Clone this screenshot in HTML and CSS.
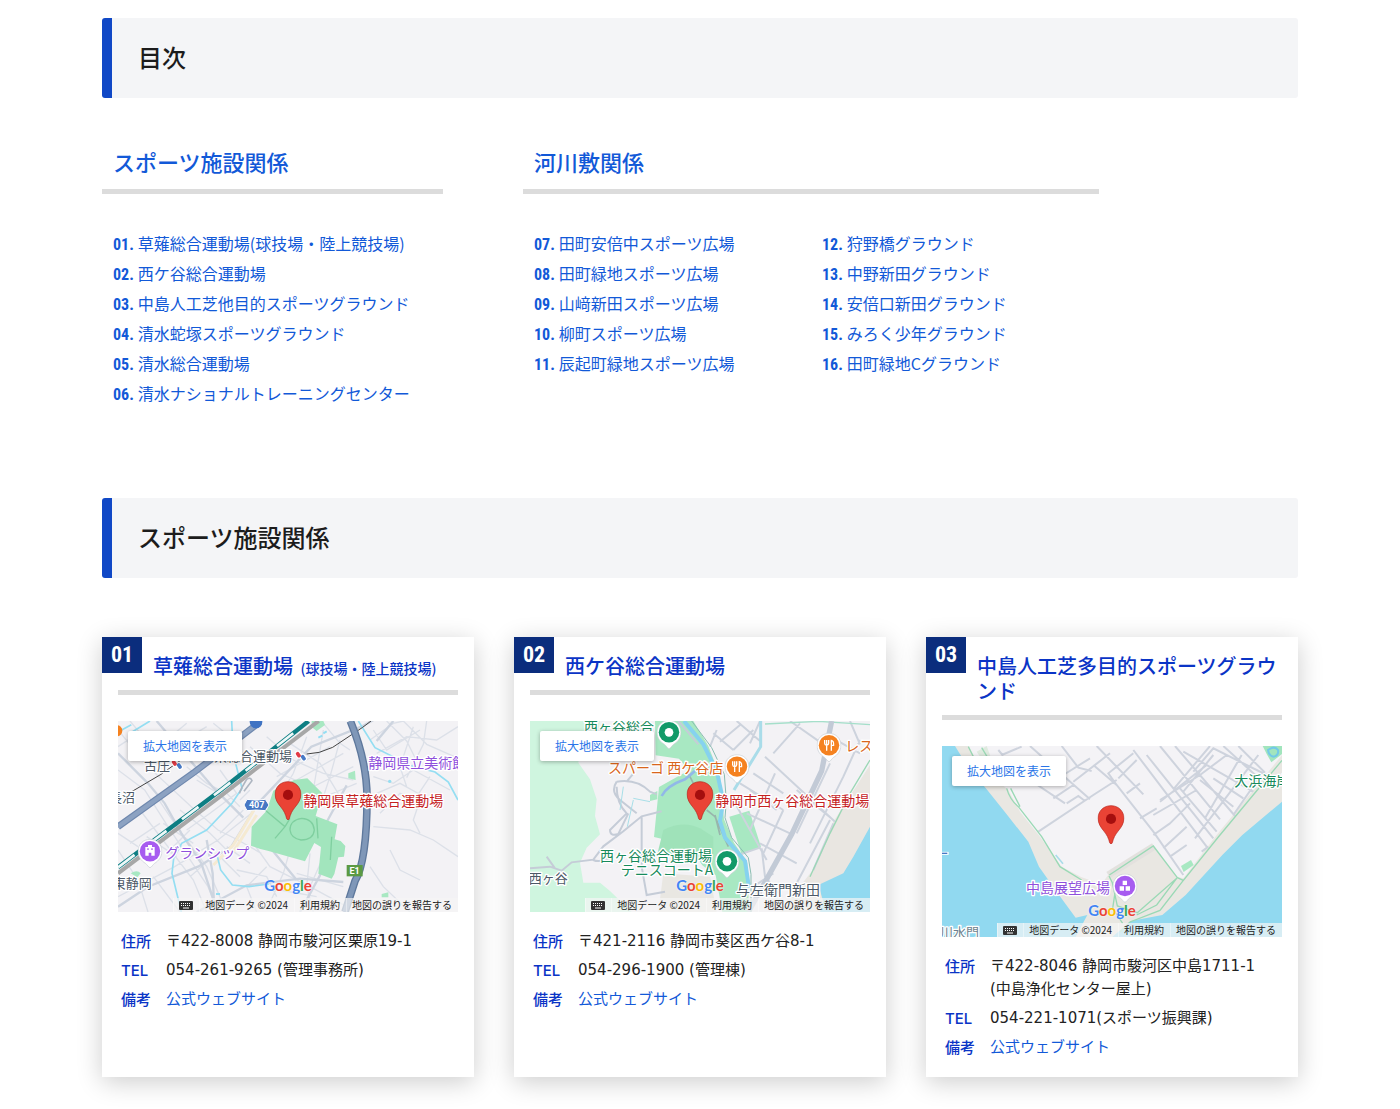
FILE: index.html
```html
<!DOCTYPE html>
<html lang="ja">
<head>
<meta charset="utf-8">
<meta name="viewport" content="width=device-width, initial-scale=1">
<title>スポーツ施設一覧</title>
<link rel="stylesheet" href="styles.css">
</head>
<body>
<svg class="sprite" aria-hidden="true">
  <symbol id="pin" viewBox="0 0 80 116">
    <path d="M40 2C18 2 2 18 2 39c0 15 7 26 17 38 9 11 14 21 17 34 1 4 7 4 8 0 3-13 8-23 17-34 10-12 17-23 17-38C78 18 62 2 40 2z" fill="#ea4335" stroke="#b8251c" stroke-width="2"/>
    <circle cx="40" cy="41" r="15" fill="#a50e0e"/>
  </symbol>
  <symbol id="marker" viewBox="0 0 72 86">
    <path d="M36 1C16 1 1 16 1 36c0 17 10 28 21 35 6 4 10 13 14 13s8-9 14-13c11-7 21-18 21-35C71 16 56 1 36 1z" fill="#fff" stroke="#c9ced4" stroke-width="2"/>
    <circle cx="36" cy="36" r="30" fill="currentColor"/>
  </symbol>
  <symbol id="fork" viewBox="0 0 34 36">
    <path d="M4 2v10q0 5 6 6v16M16 2v10q0 5-6 6M10 2v16M24 34V3q8 2 7 15h-7" fill="none" stroke="#fff" stroke-width="4"/>
  </symbol>
  <symbol id="keyboard" viewBox="0 0 14 9">
    <rect width="14" height="9" rx="1" fill="#333"/>
    <path d="M2 2.500h10M2 4.500h10" stroke="#fff" stroke-dasharray="1 1"/>
    <path d="M4 7h6" stroke="#fff"/>
  </symbol>
</svg>

<main class="page">
  <h2 class="banner">目次</h2>

  <nav class="toc" aria-label="目次">
    <section class="toc-group toc-sports">
      <h3 class="toc-title"><a href="#sports">スポーツ施設関係</a></h3>
      <ul class="toc-list">
        <li><a href="#f01"><b>01.</b>草薙総合運動場(球技場・陸上競技場)</a></li>
        <li><a href="#f02"><b>02.</b>西ケ谷総合運動場</a></li>
        <li><a href="#f03"><b>03.</b>中島人工芝他目的スポーツグラウンド</a></li>
        <li><a href="#f04"><b>04.</b>清水蛇塚スポーツグラウンド</a></li>
        <li><a href="#f05"><b>05.</b>清水総合運動場</a></li>
        <li><a href="#f06"><b>06.</b>清水ナショナルトレーニングセンター</a></li>
      </ul>
    </section>
    <section class="toc-group toc-river">
      <h3 class="toc-title"><a href="#river">河川敷関係</a></h3>
      <div class="toc-columns">
        <ul class="toc-list">
          <li><a href="#f07"><b>07.</b>田町安倍中スポーツ広場</a></li>
          <li><a href="#f08"><b>08.</b>田町緑地スポーツ広場</a></li>
          <li><a href="#f09"><b>09.</b>山﨑新田スポーツ広場</a></li>
          <li><a href="#f10"><b>10.</b>柳町スポーツ広場</a></li>
          <li><a href="#f11"><b>11.</b>辰起町緑地スポーツ広場</a></li>
        </ul>
        <ul class="toc-list">
          <li><a href="#f12"><b>12.</b>狩野橋グラウンド</a></li>
          <li><a href="#f13"><b>13.</b>中野新田グラウンド</a></li>
          <li><a href="#f14"><b>14.</b>安倍口新田グラウンド</a></li>
          <li><a href="#f15"><b>15.</b>みろく少年グラウンド</a></li>
          <li><a href="#f16"><b>16.</b>田町緑地Cグラウンド</a></li>
        </ul>
      </div>
    </section>
  </nav>

  <h2 class="banner" id="sports">スポーツ施設関係</h2>

  <div class="cards">
    <article class="card" id="f01">
      <span class="badge">01</span>
      <h3 class="card-title">草薙総合運動場 <small>(球技場・陸上競技場)</small></h3>
      <div class="map">
        <svg class="map-art" viewBox="24 33 1020 573" role="img" aria-label="草薙総合運動場の地図">
          <rect x="24" y="33" width="1020" height="573" fill="#f3f2f5"/>
          <path d="M24 180l80 60 70 110 60 90 60 90 30 76M24 60l90 110 130 120 80 70 60 30 70 40M60 400l90-60M24 420l60 90 30 96M90 300l160 210 40 96M140 260l60 90 90 120 60 136M24 560l170-90 130-80 100-80M230 170l60 50 60 30 40 40M190 110l100-60M260 210l80 50M330 180l50 70-80 60-70 50M110 380l90 60M160 340l90 60M210 300l90 70 50 50M180 420l60-60M240 500l90-80M130 500l80 106M420 110l90 80 90 40M470 80l80 70 90 40 90 20M540 100l90 60 60 100M590 80l-40 110-30 50M640 60l-20 120-10 60M690 90l-30 110-20 60M500 200l160-90M560 210l140-80M590 240l140-70M620 270l120-50M640 40l50 60 30 20M790 60l40 60 100-60M780 90l70-50 30-7M830 33l60 60 30 60M880 33l70 70 90 40M800 130l90-50 90 10 64-40M910 50l-40 120 20 60M950 33l-10 70-50 100M790 200l60 20 60-40 110 60M800 250l70-30 90 50M810 310l60-60 60 20-20 60 20 40M790 350l110 10 70 30 74 50M960 200l-40 60M430 400l50 70 120 60 110 60M470 470l-60 60 30 76M540 420l-20 70-50 110M600 430l-10 100 20 76M640 440l-40 90M560 490l140 40M510 540l110 20M380 480l90 20 30 60M350 410l70 50M330 440l60 60M24 370l60 40M780 470l40 60 80 76M840 420l30 60 60 30M170 90l60-50M24 110l60-40M60 33l50 60M310 40l50 40M400 300l-70 70M420 240l-30 30" fill="none" stroke="#dce0e8" stroke-width="4"/>
          <path d="M24 130l90 90 50 60 50 90 60 90 40 120M140 33l170 200 90 90M24 590l90-60 150-60 100-60 80-130 160-170 150-60 200-110M290 390l18 100 5 116M570 606l60-110 20-160 60-110M850 33l-50 60M260 606l150-80 160-20 130 10M470 400l90 110" fill="none" stroke="#cdd4df" stroke-width="7"/>
          <path d="M310 465l60-60 65-110M370 425l70-110" fill="none" stroke="#f5ead2" stroke-width="9"/>
          <path d="M365 33l5 100 26 102-30 45-76 80-75 40-24 45-5 45 28 116M320 430l12 50 35 45 50 5 60-8M745 33l50 80 110 55 70 18 40 30 29 54M24 66l40-22M60 70l60-37" fill="none" stroke="#94def2" stroke-width="5"/>
          <circle cx="839" cy="214" r="5" fill="#94def2"/><path d="M625 83l12-6M640 70l10-6M318 552h12" stroke="#94def2" stroke-width="6"/>
          <path d="M425 350l45-48 20-60 62-32 40-5 45 45-20 68 65 25-8 45 18 5 14 15-4 32-17 2-12 50-8 14-40-15 8-80-20-12-28 55-112-32-22-5-28-10z" fill="#a2e5bd"/>
          <path d="M605 33h35l5 12-25 18-15-12zM715 190l20-8 2 28-22-5zM62 490q20-12 30 0l-10 12zM815 552l20-5v15h-20z" fill="#a8e8c2"/>
          <path d="M465 300l60 50-30 35M525 350l15-25M540 360q0-30 35-35 35 2 38 35-3 30-40 30-30-5-33-30M620 325l4 60M665 380l-4 70" fill="none" stroke="#7fcf9f" stroke-width="4"/>
          <path d="M24 350L255 185 450 36" fill="none" stroke="#6f88ae" stroke-width="20"/>
          <path d="M24 350L255 185 450 36" fill="none" stroke="#8ca2c2" stroke-width="13"/>
          <path d="M24 490L330 260 420 190 626 33" fill="none" stroke="#a7a7a7" stroke-width="12"/>
          <path d="M24 472L330 242 420 172 596 33" fill="none" stroke="#0d7e83" stroke-width="13"/>
          <path d="M24 472L330 242 420 172 596 33" fill="none" stroke="#eef8f8" stroke-width="8" stroke-dasharray="62 58"/>
          <path d="M65 245l88-52 60-43 30-20M590 132l38-5 40-15 90-60 25-19" fill="none" stroke="#444" stroke-width="3"/>
          <path d="M388 250l8-18 14-24q12-8 16 4l-24 32" fill="none" stroke="#aeb6c1" stroke-width="5"/>
          <path d="M721 33q50 120 50 230 0 190-36 250l-30 93" fill="none" stroke="#5e789c" stroke-width="23"/>
          <path d="M721 33q50 120 50 230 0 190-36 250l-30 93" fill="none" stroke="#7f97b8" stroke-width="15"/>
          <circle cx="438" cy="36" r="19" fill="#3f73c3"/><circle cx="20" cy="62" r="17" fill="#f58220"/>
          <path d="M411 268q28 5 55 0l11 17-11 17q-27-4-55 0l-9-17z" fill="#4677c4" stroke="#fff" stroke-width="3"/>
          <text class="shield" x="440" y="295" text-anchor="middle">407</text>
          <path d="M710 465h48v34h-48z" fill="#5b9a43"/><text class="shield" x="734" y="492" text-anchor="middle">E1</text>
          <g class="label place"><text x="102" y="179">古庄</text><text x="312" y="154">県総合運動場</text><text x="-3" y="277">長沼</text><text x="8" y="535">東静岡</text></g>
          <g stroke="#fff" stroke-width="18" stroke-linecap="round"><path d="M191 156l4 6M206 165l4 6M563 131l4 6M578 140l4 6"/></g>
          <g stroke-width="11" stroke-linecap="round"><path d="M191 156l4 6M563 131l4 6" stroke="#e33b45"/><path d="M206 165l4 6M578 140l4 6" stroke="#4779c6"/></g>
          <g class="label sight"><text x="775" y="174">静岡県立美術館</text><text x="166" y="444">グランシップ</text></g>
          <use href="#marker" x="83" y="387" width="74" height="88" color="#a75cf0"/>
          <path d="M106 437v-26h8v-6h12v6h8v26zM116 437v-9h8v9zM112 415v5h4v-5zM124 415v5h4v-5z" fill="#fff" fill-rule="evenodd"/>
          <use href="#pin" x="493" y="213" width="82" height="118"/>
          <text class="label target" x="580" y="288">静岡県草薙総合運動場</text>
        </svg>
        <a class="map-open" href="#map01">拡大地図を表示</a>
        <span class="map-logo"><i>G</i><i>o</i><i>o</i><i>g</i><i>l</i><i>e</i></span>
        <div class="map-credit"><button type="button" aria-label="キーボード ショートカット"><svg width="14" height="9" aria-hidden="true"><use href="#keyboard"/></svg></button><span>地図データ ©2024</span><a href="#terms">利用規約</a><a href="#report">地図の誤りを報告する</a></div>
      </div>
      <dl class="details">
        <dt>住所</dt><dd>〒422-8008 静岡市駿河区栗原19-1</dd>
        <dt>TEL</dt><dd>054-261-9265 (管理事務所)</dd>
        <dt>備考</dt><dd><a href="#site01">公式ウェブサイト</a></dd>
      </dl>
    </article>

    <article class="card" id="f02">
      <span class="badge">02</span>
      <h3 class="card-title">西ケ谷総合運動場</h3>
      <div class="map">
        <svg class="map-art" viewBox="30 33 1020 573" role="img" aria-label="西ケ谷総合運動場の地図">
          <rect x="30" y="33" width="1020" height="573" fill="#f3f2f5"/>
          <path d="M30 33h210l-10 50-45 15-10 60 35 50 20 60-5 50 15 55-40 40-20 45 10 60 50 0 30 25 65 63H30z" fill="#cff5df"/>
          <path d="M430 490l140 10 20 106H415z" fill="#e9e7e2"/>
          <path d="M405 33h115l45 75 35 90 12 130 30 70 40 60 5 148h-80l-20-110-40-30-40-60-105-25 15-150 90-50-30-35-70-10z" fill="#a8e8c2"/>
          <path d="M628 320l60-18 35 108-58 24z" fill="#a8e8c2"/><path d="M390 255l22-12v25l-22 5z" fill="#a8e8c2"/>
          <path d="M430 360q60-30 110-5l40 25v60H410z" fill="#9fe2b9"/>
          <path d="M1050 165l-110 170-50 130-110 141h270z" fill="#e9e6e1"/>
          <path d="M1050 350l-50 90-30 50-75 35 15 50-10 31h150z" fill="#91d9f0"/>
          <path d="M30 475l60-5 35 12 30-25 65-8 30-40 60-45 55-45 60-15M80 440l25 35M220 450q20 10 60-10M290 215q-20 30 10 55l50 40M290 215q60-10 100 30l20 8M290 230q0 50 30 80l-50 50q0 20 25 12l30-62M365 320v150l15 85 55-10M320 215l25-30M475 33l60 70" fill="none" stroke="#c5ccd7" stroke-width="6"/>
          <path d="M310 230l-10 70M340 265l50 10M340 270l-18 80" fill="none" stroke="#a8dfe8" stroke-width="3"/>
          <path d="M580 70l60 50M600 95l60-50M640 120l60-60M690 100l30-67M760 130l80-90M810 33l100 70M735 140l210 195M700 190l90 60M660 220l130 80M830 240l110 90M690 240l80 60M730 430l60-130M690 360l75-170M640 270l100 180M655 435l65-22M830 520l100-190M880 480l60-140M930 160l-100 210M970 200l-100 200M1020 90l-50 110M930 80l90 50M990 33l30 70M680 310l130 60M720 400l110 60M725 415l10 85 50 60M700 530l60-40M590 60l-20 50M650 33l70 60" fill="none" stroke="#cdd3dd" stroke-width="6"/>
          <path d="M735 42l160-8 155 10" fill="none" stroke="#a5dfca" stroke-width="4"/><path d="M722 33v77l-80 130" fill="none" stroke="#a9dce9" stroke-width="9"/>
          <path d="M1050 150l-60 100-60 120-60 130" fill="none" stroke="#9bd7b5" stroke-width="4"/>
          <path d="M935 33l-30 150-90 190-130 233" fill="none" stroke="#c2cad6" stroke-width="16"/>
          <path d="M505 190l15 30M560 300l25 20 40 90M585 315l15 60" fill="none" stroke="#98b5ac" stroke-width="5"/>
          <path d="M492 33l58 70 40 80 20 90-10 60 15 50 60 70 12 80" fill="none" stroke="#86d2ef" stroke-width="12"/>
          <path d="M515 33l60 80 38 80 6 80-4 50 20 60 50 60 8 50v113" fill="none" stroke="#8bbdb2" stroke-width="3"/>
          <path d="M425 258q15-30 70-50l60-50" fill="none" stroke="#91b8e8" stroke-width="8"/>
          <g class="label sports"><text x="192" y="65">西ヶ谷総合</text><text x="240" y="453">西ヶ谷総合運動場</text><text x="302" y="495">テニスコートA</text></g>
          <g class="label food"><text x="264" y="189">スパーゴ 西ケ谷店</text><text x="976" y="124">レストラン</text></g>
          <g class="label place"><text x="26" y="518">西ヶ谷</text><text x="648" y="554" class="wide">与左衛門新田</text></g>
          <g color="#129a68"><use href="#marker" x="410" y="30" width="74" height="88"/><use href="#marker" x="584" y="417" width="74" height="88"/></g>
          <circle cx="447" cy="67" r="13" fill="#fff"/><circle cx="621" cy="454" r="13" fill="#fff"/>
          <g color="#f58220"><use href="#marker" x="614" y="133" width="74" height="88"/><use href="#marker" x="890" y="69" width="74" height="88"/></g>
          <use href="#fork" x="634" y="152" width="34" height="36"/><use href="#fork" x="910" y="88" width="34" height="36"/>
          <use href="#pin" x="499" y="213" width="82" height="118"/>
          <text class="label target" x="586" y="288">静岡市西ヶ谷総合運動場</text>
        </svg>
        <a class="map-open" href="#map02">拡大地図を表示</a>
        <span class="map-logo"><i>G</i><i>o</i><i>o</i><i>g</i><i>l</i><i>e</i></span>
        <div class="map-credit"><button type="button" aria-label="キーボード ショートカット"><svg width="14" height="9" aria-hidden="true"><use href="#keyboard"/></svg></button><span>地図データ ©2024</span><a href="#terms">利用規約</a><a href="#report">地図の誤りを報告する</a></div>
      </div>
      <dl class="details">
        <dt>住所</dt><dd>〒421-2116 静岡市葵区西ケ谷8-1</dd>
        <dt>TEL</dt><dd>054-296-1900 (管理棟)</dd>
        <dt>備考</dt><dd><a href="#site02">公式ウェブサイト</a></dd>
      </dl>
    </article>

    <article class="card" id="f03">
      <span class="badge">03</span>
      <h3 class="card-title">中島人工芝多目的スポーツグラウンド</h3>
      <div class="map">
        <svg class="map-art" viewBox="36 33 1020 573" role="img" aria-label="中島人工芝多目的スポーツグラウンドの地図">
          <rect x="36" y="33" width="1020" height="573" fill="#91d9f0"/>
          <path d="M75 33l40 65 55 65 60 75 65 82 32 75 60 85 50 68 35-8-35 66h110l55-48 95-18 70-60 110-120 60-60 119-100V33z" fill="#e9e7e2"/>
          <path d="M115 33l35 60 85 72 35 65 60 75 65 90 60 32 60 20 30-42 125-70 70 90 20 5 100-130 196-240V33z" fill="#f4f3f6"/>
          <path d="M140 50l30-17 22 60 30 40-30-5z" fill="#dfeadf"/>
          <path d="M205 45l50 60 150 100M215 60l60-25M300 33l90 80 90 80M400 120l80-50M325 290l165-110 70-45M370 190l60-40M410 205l35-22 20 15M395 33l50 65 40 10M430 140l110-85M490 90l70 60 110 140 90 130M500 33l140 145M560 150l-25-35 75-60M590 175l40-30M610 45l220 290M650 60l200 250M690 33l180 220M735 33l180 210M620 75l-55 55M690 195l120-75 80-60M670 240l130-75M630 250l50-30M670 300l50-35M700 340l70-65M720 365l50-35M690 200l140-110M760 50l210 120M840 33l-110 130M790 110l60-70 160 80M880 33l110 100M925 33l80 80M985 60l-190 250M935 60l-110 190M1000 110l-90 130M940 190l-90-60M910 215l-100-80M860 290l-110-130M850 60l-90 110M720 265l60-60M815 350l20-15" fill="none" stroke="#ced3dd" stroke-width="6"/>
          <path d="M535 420l137-86" fill="none" stroke="#e3e1de" stroke-width="22"/>
          <path d="M115 35l20 40M155 38l18 30M230 160q10 35 35 55l70 90 55 90 65 40M270 215l-28-55M538 420l132-87 72 95-120 105-60-20-15-70-10-20M560 440l-12 80 30 45M742 428l18 8 105-130 191-230M760 436l-70 90-90 35-30 30M740 430l-60 80-60 30" fill="none" stroke="#9ad9b5" stroke-width="4"/>
          <path d="M377 360l22 26" fill="none" stroke="#a9dce9" stroke-width="5"/>
          <path d="M753 393l30-18 8 15-30 21z" fill="#a8e8c2"/>
          <path d="M998 33h58v24l-32 25-14-25z" fill="#a2e5bd"/><path d="M1014 45q20-14 30 0 3 15-12 20-16-2-18-20z" fill="none" stroke="#73c9e8" stroke-width="6"/>
          <path d="M36 355h20" stroke="#fff" stroke-width="9"/><path d="M36 355h16" stroke="#4677c4" stroke-width="4"/>
          <text class="label sports" x="913" y="154">大浜海岸</text>
          <text class="label sight" x="288" y="474">中島展望広場</text>
          <text class="label water" x="30" y="605">川水門</text>
          <use href="#marker" x="548" y="416" width="74" height="88" color="#a75cf0"/>
          <path d="M578 437h13v13h-13zM569 454h13v13h-13zM587 454h13v13h-13z" fill="#fff"/>
          <use href="#pin" x="502" y="210" width="82" height="118"/>
        </svg>
        <a class="map-open" href="#map03">拡大地図を表示</a>
        <span class="map-logo"><i>G</i><i>o</i><i>o</i><i>g</i><i>l</i><i>e</i></span>
        <div class="map-credit"><button type="button" aria-label="キーボード ショートカット"><svg width="14" height="9" aria-hidden="true"><use href="#keyboard"/></svg></button><span>地図データ ©2024</span><a href="#terms">利用規約</a><a href="#report">地図の誤りを報告する</a></div>
      </div>
      <dl class="details">
        <dt>住所</dt><dd>〒422-8046 静岡市駿河区中島1711-1<br>(中島浄化センター屋上)</dd>
        <dt>TEL</dt><dd>054-221-1071(スポーツ振興課)</dd>
        <dt>備考</dt><dd><a href="#site03">公式ウェブサイト</a></dd>
      </dl>
    </article>
  </div>
</main>
</body>
</html>
```
FILE: styles.css
```css
*,
*::before,
*::after {
  box-sizing: border-box;
}

body {
  margin: 0;
  background: #fff;
  color: #222;
  font-family: "Noto Sans CJK JP", sans-serif;
  font-size: 16px;
}

h2,
h3,
ul,
dl,
dd {
  margin: 0;
  padding: 0;
}

ul {
  list-style: none;
}

a {
  color: #1259d8;
  text-decoration: none;
}

.sprite {
  display: none;
}

.page {
  width: calc(100% - 40px);
  max-width: 1196px;
  margin: 0 auto;
  padding: 18px 0 32px;
}

.banner {
  padding: 19px 26px 21px;
  border-left: 10px solid #1048c6;
  border-radius: 3px;
  background: #f4f5f7;
  color: #1c1c1c;
  font-size: 24px;
  font-weight: 500;
  line-height: 40px;
}

/* table of contents */
.toc {
  display: flex;
  gap: 80px;
  margin: 48px 0 90px;
}

.toc-sports {
  flex: 0 1 341px;
}

.toc-river {
  flex: 0 1 576px;
}

.toc-title {
  margin-bottom: 34px;
  padding: 0 11px 13px;
  border-bottom: 5px solid #dcdcdc;
  font-size: 22px;
  font-weight: 500;
  line-height: 30px;
}

.toc-columns {
  display: grid;
  grid-template-columns: 1fr 1fr;
}

.toc-list {
  padding-left: 11px;
  line-height: 30px;
  white-space: nowrap;
}

.toc-list b {
  margin-right: 4px;
  font-family: "Roboto Condensed", Roboto, sans-serif;
  font-size: 16px;
  font-weight: 700;
  line-height: 1;
}

/* facility cards */
.cards {
  display: grid;
  grid-template-columns: repeat(3, minmax(0, 1fr));
  gap: 40px;
  margin-top: 59px;
}

.card {
  position: relative;
  padding: 16px 16px 18px;
  background: #fff;
  box-shadow: 0 5px 24px rgba(0, 0, 0, 0.2);
}

.badge {
  position: absolute;
  top: 0;
  left: 0;
  padding: 0 9px;
  background: #0b2d7d;
  color: #fff;
  font-family: "Roboto Condensed", Roboto, sans-serif;
  font-size: 22px;
  font-weight: 700;
  line-height: 36px;
}

.card-title {
  margin-bottom: 26px;
  padding: 0 0 12px 35px;
  border-bottom: 5px solid #dcdcdc;
  color: #0a34c6;
  font-size: 20px;
  font-weight: 500;
  line-height: 25px;
}

.card-title small {
  margin-left: 3px;
  font-size: 14px;
  line-height: 1;
}

.map {
  position: relative;
  overflow: hidden;
}

.map-art {
  display: block;
  width: 100%;
  height: auto;
}

/* map drawing uses three units per pixel */
.label {
  font-size: 42px;
  stroke: #fff;
  stroke-width: 8px;
  stroke-linejoin: round;
  paint-order: stroke;
}

.place {
  fill: #4c5866;
  font-size: 39px;
}

.wide {
  font-size: 42px;
}

.sight {
  fill: #8f50dc;
}

.sports {
  fill: #178a5b;
}

.food {
  fill: #d9661c;
}

.water {
  fill: #6d7f8d;
  font-size: 39px;
}

.target {
  fill: #c5221f;
}

.shield {
  fill: #fff;
  font-family: Roboto, sans-serif;
  font-size: 27px;
  font-weight: 700;
}

.map-open {
  position: absolute;
  top: 10px;
  left: 10px;
  padding: 0 15px;
  border-radius: 2px;
  background: #fff;
  box-shadow: 0 1px 4px rgba(0, 0, 0, 0.3);
  color: #2a74e8;
  font-size: 12px;
  line-height: 30px;
}

.map-logo {
  position: absolute;
  right: 0;
  bottom: 15px;
  left: 0;
  color: #4285f4;
  font-family: Lato, sans-serif;
  font-size: 15px;
  font-weight: 700;
  line-height: 24px;
  text-align: center;
  text-shadow: 0 0 2px #fff;
}

.map-logo i {
  font-style: normal;
}

.map-logo i:nth-child(2),
.map-logo i:nth-child(6) {
  color: #ea4335;
}

.map-logo i:nth-child(3) {
  color: #fbbc04;
}

.map-logo i:nth-child(5) {
  color: #34a853;
}

.map-credit {
  position: absolute;
  right: 0;
  bottom: 0;
  display: flex;
  font-size: 10px;
  line-height: 14px;
  white-space: nowrap;
}

.map-credit > * {
  padding: 0 6px 0 5px;
  border: 0;
  border-left: 1px solid rgba(255, 255, 255, 0.4);
  background: rgba(245, 245, 245, 0.7);
  color: #222;
}

.map-credit button {
  display: flex;
  align-items: center;
}

.details {
  display: grid;
  grid-template-columns: 45px 1fr;
  row-gap: 6px;
  margin-top: 18px;
  padding-left: 3px;
  font-size: 15px;
  line-height: 23px;
}

.details dt {
  color: #0a34c6;
  font-family: Inter, "Noto Sans CJK JP", sans-serif;
  font-weight: 500;
}

.details dd {
  font-family: "DejaVu Sans", "Noto Sans CJK JP", sans-serif;
}
```
